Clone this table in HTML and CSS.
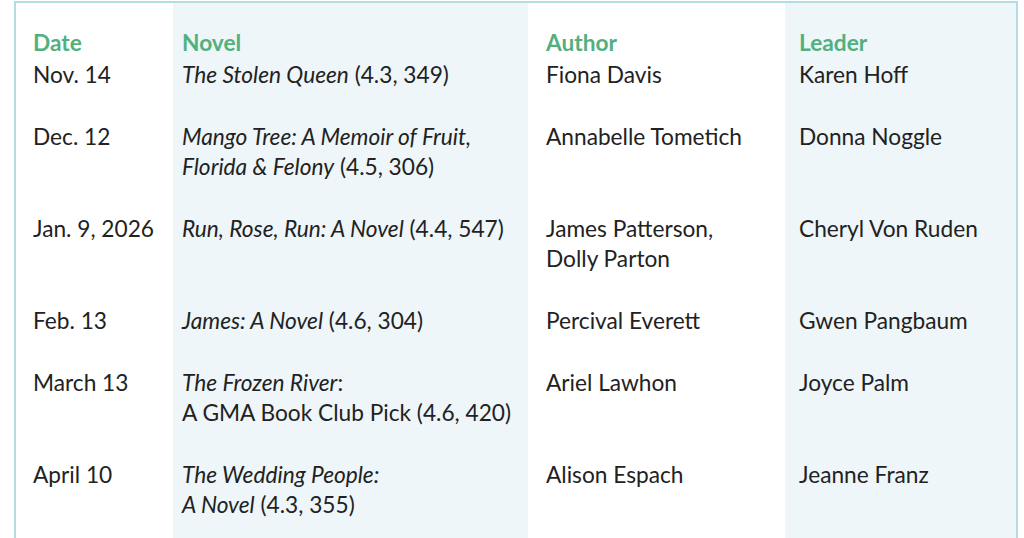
FILE: index.html
```html
<!DOCTYPE html>
<html>
<head>
<meta charset="utf-8">
<link rel="stylesheet" href="styles.css">
</head>
<body>
<div class="wrap">
<table class="schedule">
  <colgroup>
    <col class="c-date">
    <col class="c-novel">
    <col class="c-author">
    <col class="c-leader">
  </colgroup>
  <thead>
    <tr>
      <th class="p-date">Date</th>
      <th class="p-novel">Novel</th>
      <th class="p-author">Author</th>
      <th class="p-leader">Leader</th>
    </tr>
  </thead>
  <tbody>
    <tr>
      <td class="p-date">Nov. 14</td>
      <td class="p-novel"><em>The Stolen Queen</em> (4.3, 349)</td>
      <td class="p-author">Fiona Davis</td>
      <td class="p-leader">Karen Hoff</td>
    </tr>
    <tr>
      <td class="p-date">Dec. 12</td>
      <td class="p-novel"><em>Mango Tree: A Memoir of Fruit,<br>Florida &amp; Felony</em> (4.5, 306)</td>
      <td class="p-author">Annabelle Tometich</td>
      <td class="p-leader">Donna Noggle</td>
    </tr>
    <tr>
      <td class="p-date">Jan. 9, 2026</td>
      <td class="p-novel"><em>Run, Rose, Run: A Novel</em> (4.4, 547)</td>
      <td class="p-author">James Patterson,<br>Dolly Parton</td>
      <td class="p-leader">Cheryl Von Ruden</td>
    </tr>
    <tr>
      <td class="p-date">Feb. 13</td>
      <td class="p-novel"><em>James: A Novel</em> (4.6, 304)</td>
      <td class="p-author">Percival Everett</td>
      <td class="p-leader">Gwen Pangbaum</td>
    </tr>
    <tr>
      <td class="p-date">March 13</td>
      <td class="p-novel"><em>The Frozen River</em>:<br>A GMA Book Club Pick (4.6, 420)</td>
      <td class="p-author">Ariel Lawhon</td>
      <td class="p-leader">Joyce Palm</td>
    </tr>
    <tr>
      <td class="p-date">April 10</td>
      <td class="p-novel"><em>The Wedding People:<br>A Novel</em> (4.3, 355)</td>
      <td class="p-author">Alison Espach</td>
      <td class="p-leader">Jeanne Franz</td>
    </tr>
  </tbody>
</table>
</div>
</body>
</html>
```
FILE: styles.css
```css
html, body {
  margin: 0;
  padding: 0;
  background: #ffffff;
}
body {
  font-family: Lato, "Open Sans", sans-serif;
  color: #222222;
}
.wrap {
  margin: 1px 0 0 14px;
  width: 1004px;
  border: 2px solid #b4dce3;
  border-bottom: none;
  box-sizing: border-box;
}
.schedule {
  width: 100%;
  border-collapse: collapse;
  table-layout: fixed;
  font-size: 22.7px;
  line-height: 30px;
}
.c-date { width: 157px; }
.c-novel { width: 355px; background: #eef6f9; }
.c-author { width: 257px; }
.c-leader { background: #eef6f9; }
.schedule th {
  text-align: left;
  font-weight: 700;
  color: #52b07f;
  padding-top: 25px;
  padding-bottom: 1.5px;
  vertical-align: top;
}
.schedule td {
  vertical-align: top;
  padding-top: 0;
  padding-bottom: 32.2px;
}
.schedule em { font-style: italic; }
.p-date { padding-left: 17px; padding-right: 0; }
.p-novel { padding-left: 9px; padding-right: 0; }
.p-author { padding-left: 18px; padding-right: 0; }
.p-leader { padding-left: 14px; padding-right: 0; }
```
